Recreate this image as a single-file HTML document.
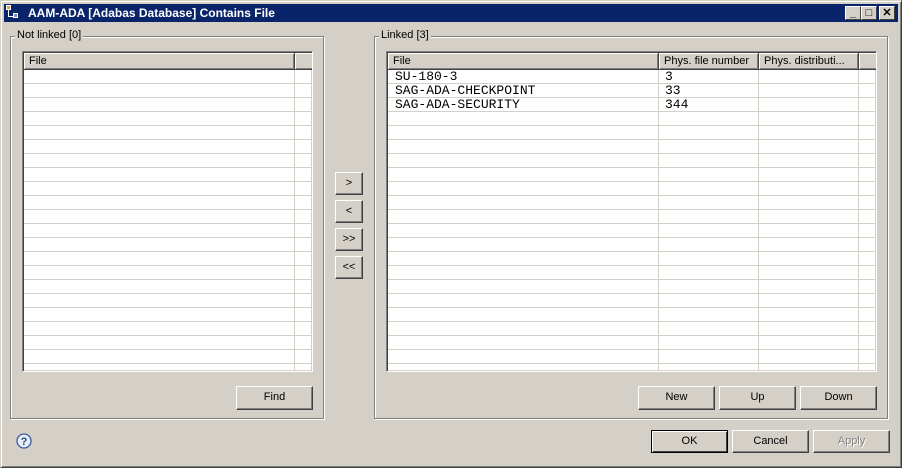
<!DOCTYPE html>
<html><head><meta charset="utf-8"><style>
*{box-sizing:border-box;margin:0;padding:0}
body{width:902px;height:468px;background:#d4d0c8;font-family:"Liberation Sans",sans-serif;font-size:11px;color:#000;position:relative;overflow:hidden}
.abs{position:absolute}
.win{left:0;top:0;width:902px;height:468px;border-top:1px solid #d4d0c8;border-left:1px solid #d4d0c8;border-right:1px solid #404040;border-bottom:1px solid #404040;box-shadow:inset 1px 1px 0 #fff,inset -1px -1px 0 #808080}
.title{left:4px;top:4px;width:894px;height:18px;background:#0a246a;color:#fff;font-weight:bold;font-size:12px;line-height:18px;padding-left:24px}
.grp{border:1px solid #808080;box-shadow:1px 1px 0 #fff,inset 1px 1px 0 #fff}
.lbl{background:#d4d0c8;padding:0 2px;line-height:13px}
.btn{background:#d4d0c8;border-top:1px solid #fff;border-left:1px solid #fff;border-right:1px solid #404040;border-bottom:1px solid #404040;box-shadow:inset -1px -1px 0 #808080;text-align:center;line-height:21px}
.tbl{background:#fff;border-top:1px solid #808080;border-left:1px solid #808080;border-right:1px solid #fff;border-bottom:1px solid #fff;box-shadow:inset 1px 1px 0 #404040,inset -1px -1px 0 #d4d0c8;overflow:hidden}
.hd{position:absolute;top:1px;height:17px;background:#d4d0c8;border-right:1px solid #404040;border-bottom:1px solid #404040;box-shadow:inset 1px 1px 0 #fff,inset -1px -1px 0 #808080;padding-left:5px;line-height:16px}
.rows{position:absolute;left:1px;right:1px;top:18px;bottom:1px;background-image:repeating-linear-gradient(to bottom,transparent 0,transparent 13px,#d4d0c8 13px,#d4d0c8 14px)}
.vl{position:absolute;top:18px;bottom:1px;width:1px;background:#d4d0c8}
.cell{position:absolute;font-family:"Liberation Mono",monospace;font-size:13px;line-height:14px}
.tb{top:6px;width:16px;height:14px;background:#d4d0c8;border-top:1px solid #fff;border-left:1px solid #fff;border-right:1px solid #404040;border-bottom:1px solid #404040;font-size:11px;font-weight:bold;text-align:center;line-height:12px;color:#000}
</style></head><body>
<div class="abs win"></div>
<div class="abs title">AAM-ADA [Adabas Database] Contains File</div>
<div class="abs" style="left:6px;top:5px;width:5px;height:5px;background:#f0a030;border:1px solid #fff"></div>
<div class="abs" style="left:8px;top:10px;width:1px;height:7px;background:#fff"></div>
<div class="abs" style="left:8px;top:16px;width:5px;height:1px;background:#fff"></div>
<div class="abs" style="left:13px;top:13px;width:5px;height:5px;background:#8090c0;border:1px solid #fff"></div>
<div class="abs tb" style="left:845px">_</div>
<div class="abs tb" style="left:861px">□</div>
<div class="abs tb" style="left:879px">✕</div>

<div class="abs grp" style="left:10px;top:36px;width:314px;height:383px"></div>
<div class="abs lbl" style="left:15px;top:29px">Not linked [0]</div>
<div class="abs tbl" style="left:22px;top:51px;width:291px;height:321px">
 <div class="hd" style="left:1px;width:271px">File</div>
 <div class="hd" style="left:272px;width:20px;border-right:none"></div>
 <div class="rows"></div>
 <div class="vl" style="left:271px"></div>
</div>
<div class="abs btn" style="left:236px;top:386px;width:77px;height:24px">Find</div>

<div class="abs btn" style="left:335px;top:172px;width:28px;height:23px">&gt;</div>
<div class="abs btn" style="left:335px;top:200px;width:28px;height:23px">&lt;</div>
<div class="abs btn" style="left:335px;top:228px;width:28px;height:23px">&gt;&gt;</div>
<div class="abs btn" style="left:335px;top:256px;width:28px;height:23px">&lt;&lt;</div>

<div class="abs grp" style="left:374px;top:36px;width:514px;height:383px"></div>
<div class="abs lbl" style="left:379px;top:29px">Linked [3]</div>
<div class="abs tbl" style="left:386px;top:51px;width:491px;height:321px">
 <div class="hd" style="left:1px;width:271px">File</div>
 <div class="hd" style="left:272px;width:100px">Phys. file number</div>
 <div class="hd" style="left:372px;width:100px">Phys. distributi...</div>
 <div class="hd" style="left:472px;width:20px;border-right:none"></div>
 <div class="rows"></div>
 <div class="vl" style="left:271px"></div>
 <div class="vl" style="left:371px"></div>
 <div class="vl" style="left:471px"></div>
 <div class="cell" style="left:8px;top:18px">SU-180-3</div>
 <div class="cell" style="left:278px;top:18px">3</div>
 <div class="cell" style="left:8px;top:32px">SAG-ADA-CHECKPOINT</div>
 <div class="cell" style="left:278px;top:32px">33</div>
 <div class="cell" style="left:8px;top:46px">SAG-ADA-SECURITY</div>
 <div class="cell" style="left:278px;top:46px">344</div>
</div>
<div class="abs btn" style="left:638px;top:386px;width:77px;height:24px">New</div>
<div class="abs btn" style="left:719px;top:386px;width:77px;height:24px">Up</div>
<div class="abs btn" style="left:800px;top:386px;width:77px;height:24px">Down</div>

<svg class="abs" style="left:16px;top:433px" width="16" height="16" viewBox="0 0 16 16"><circle cx="8" cy="8" r="7" fill="#e8eef8" stroke="#3a5a9a" stroke-width="1.3"/><text x="8" y="12" font-family="Liberation Sans" font-size="11" font-weight="bold" fill="#2a4a8a" text-anchor="middle">?</text></svg>

<div class="abs btn" style="left:651px;top:430px;width:77px;height:23px;border:1px solid #000;box-shadow:inset 1px 1px 0 #fff,inset -1px -1px 0 #404040">OK</div>
<div class="abs btn" style="left:732px;top:430px;width:77px;height:23px">Cancel</div>
<div class="abs btn" style="left:813px;top:430px;width:77px;height:23px;color:#808080;text-shadow:1px 1px 0 #fff">Apply</div>
</body></html>
